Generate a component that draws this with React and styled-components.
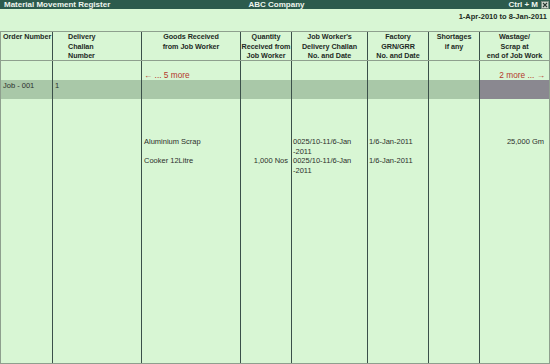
import React from "react";
import styled, { createGlobalStyle } from "styled-components";

const Global = createGlobalStyle`
  html, body { margin: 0; padding: 0; }
  body {
    font-family: "Liberation Sans", Arial, sans-serif;
    background: #d8f6d4;
  }
`;

const COLS = "51px 89px 99px 51px 76px 61px 51px 70px";
const LINE = "#8e9f8e";
const SEP = "#3b504a";

const Window = styled.div`
  width: 550px;
  height: 364px;
  display: flex;
  flex-direction: column;
  background: #d8f6d4;
  overflow: hidden;
`;

const TitleBar = styled.div`
  height: 9px;
  display: grid;
  grid-template-columns: 1fr auto 1fr;
  align-items: center;
  background: #2c5b4d;
  color: #eef5ee;
  font-size: 8px;
  font-weight: bold;
  line-height: 9px;
  padding: 0 1px 0 4px;
  overflow: hidden;
`;

const TitleRight = styled.div`
  display: flex;
  justify-content: flex-end;
  align-items: center;
  gap: 3px;
`;

const PeriodRow = styled.div`
  height: 22px;
  display: flex;
  justify-content: flex-end;
  align-items: flex-start;
  padding: 3px 3px 0 0;
  box-sizing: border-box;
  font-size: 7.5px;
  font-weight: bold;
  line-height: 9.5px;
  color: #1d2b24;
`;

const Table = styled.div`
  flex: 1;
  display: flex;
  flex-direction: column;
  border: 1px solid ${LINE};
`;

const Row = styled.div`
  display: grid;
  grid-template-columns: ${COLS};
  height: ${(p) => (p.$h ? `${p.$h}px` : "auto")};
  flex: ${(p) => (p.$fill ? 1 : "none")};
  background: ${(p) => (p.$highlight ? "#a9c8a8" : "transparent")};
`;

const HeaderRow = styled(Row)`
  height: 28px;
  border-bottom: 1px solid ${LINE};
`;

const Cell = styled.div`
  box-sizing: border-box;
  border-left: 1px solid ${SEP};
  &:first-child { border-left: none; }
  padding: ${(p) => p.$pad || "0 2px 0 2px"};
  display: flex;
  flex-direction: column;
  justify-content: ${(p) => (p.$bottom ? "flex-end" : "flex-start")};
  text-align: ${(p) => p.$align || "left"};
  align-items: ${(p) =>
    p.$align === "right" ? "flex-end" : p.$align === "center" ? "center" : "flex-start"};
  background: ${(p) => p.$bg || "transparent"};
  font-size: 7.5px;
  line-height: 9.5px;
  color: #2c2f2c;
  white-space: nowrap;
  overflow: hidden;
`;

const HeadCell = styled(Cell)`
  font-weight: bold;
  font-size: 7.2px;
  letter-spacing: -0.05px;
  color: #1d2a24;
  padding-top: 0;
`;

const More = styled.span`
  color: #b4372b;
  font-size: 8.3px;
  line-height: 9.5px;
`;

const CloseIcon = () => (
  <svg width="8" height="8" viewBox="0 0 8 8">
    <rect x="0.5" y="0.5" width="7" height="7" fill="#cfd8cf" stroke="#7c8c82" />
    <path d="M2 2 L6 6 M6 2 L2 6" stroke="#2b3a33" strokeWidth="1.1" />
  </svg>
);

const headers = [
  { lines: ["Order Number"], align: "left", pad: "0 0 0 2px" },
  { lines: ["Delivery", "Challan", "Number"], align: "left", pad: "0 2px 0 15px" },
  { lines: ["Goods Received", "from Job Worker"], align: "center" },
  { lines: ["Quantity", "Received from", "Job Worker"], align: "center", pad: "0" },
  { lines: ["Job Worker's", "Delivery Challan", "No. and Date"], align: "center", pad: "0" },
  { lines: ["Factory", "GRN/GRR", "No. and Date"], align: "center", pad: "0" },
  { lines: ["Shortages", "if any"], align: "center", pad: "0" },
  { lines: ["Wastage/", "Scrap at", "end of Job Work"], align: "center", pad: "0" },
];

const items = [
  {
    goods: "Aluminium Scrap",
    qty: "",
    challan: ["0025/10-11/6-Jan", "-2011"],
    grn: "1/6-Jan-2011",
    waste: "25,000 Gm",
  },
  {
    goods: "Cooker 12Litre",
    qty: "1,000 Nos",
    challan: ["0025/10-11/6-Jan", "-2011"],
    grn: "1/6-Jan-2011",
    waste: "",
  },
];

export default function App() {
  return (
    <Window>
      <Global />
      <TitleBar>
        <span>Material Movement Register</span>
        <span>ABC Company</span>
        <TitleRight>
          <span>Ctrl + M</span>
          <CloseIcon />
        </TitleRight>
      </TitleBar>
      <PeriodRow>1-Apr-2010 to 8-Jan-2011</PeriodRow>
      <Table>
        <HeaderRow>
          {headers.map((h, i) => (
            <HeadCell key={i} $align={h.align} $pad={h.pad}>
              {h.lines.map((l) => (
                <span key={l}>{l}</span>
              ))}
            </HeadCell>
          ))}
        </HeaderRow>
        <Row $h={19}>
          <Cell />
          <Cell />
          <Cell $bottom $pad="0 2px 0 2px">
            <More>← ... 5 more</More>
          </Cell>
          <Cell />
          <Cell />
          <Cell />
          <Cell />
          <Cell $bottom $align="right" $pad="0 4px 0 0">
            <More>2 more ... →</More>
          </Cell>
        </Row>
        <Row $h={19} $highlight>
          <Cell $pad="1px 2px 0 2px">Job - 001</Cell>
          <Cell $pad="1px 2px 0 2px">1</Cell>
          <Cell />
          <Cell />
          <Cell />
          <Cell />
          <Cell />
          <Cell $bg="#8a8890" />
        </Row>
        <Row $h={38}>
          {Array.from({ length: 8 }).map((_, i) => (
            <Cell key={i} />
          ))}
        </Row>
        {items.map((it) => (
          <Row key={it.goods} $h={19}>
            <Cell />
            <Cell />
            <Cell $pad="0 2px 0 2px">{it.goods}</Cell>
            <Cell $align="right" $pad="0 3px 0 0">{it.qty}</Cell>
            <Cell $pad="0 1px 0 1px">
              {it.challan.map((l) => (
                <span key={l}>{l}</span>
              ))}
            </Cell>
            <Cell $pad="0 1px 0 1px">{it.grn}</Cell>
            <Cell />
            <Cell $align="right" $pad="0 5px 0 0">{it.waste}</Cell>
          </Row>
        ))}
        <Row $fill>
          {Array.from({ length: 8 }).map((_, i) => (
            <Cell key={i} />
          ))}
        </Row>
      </Table>
    </Window>
  );
}
